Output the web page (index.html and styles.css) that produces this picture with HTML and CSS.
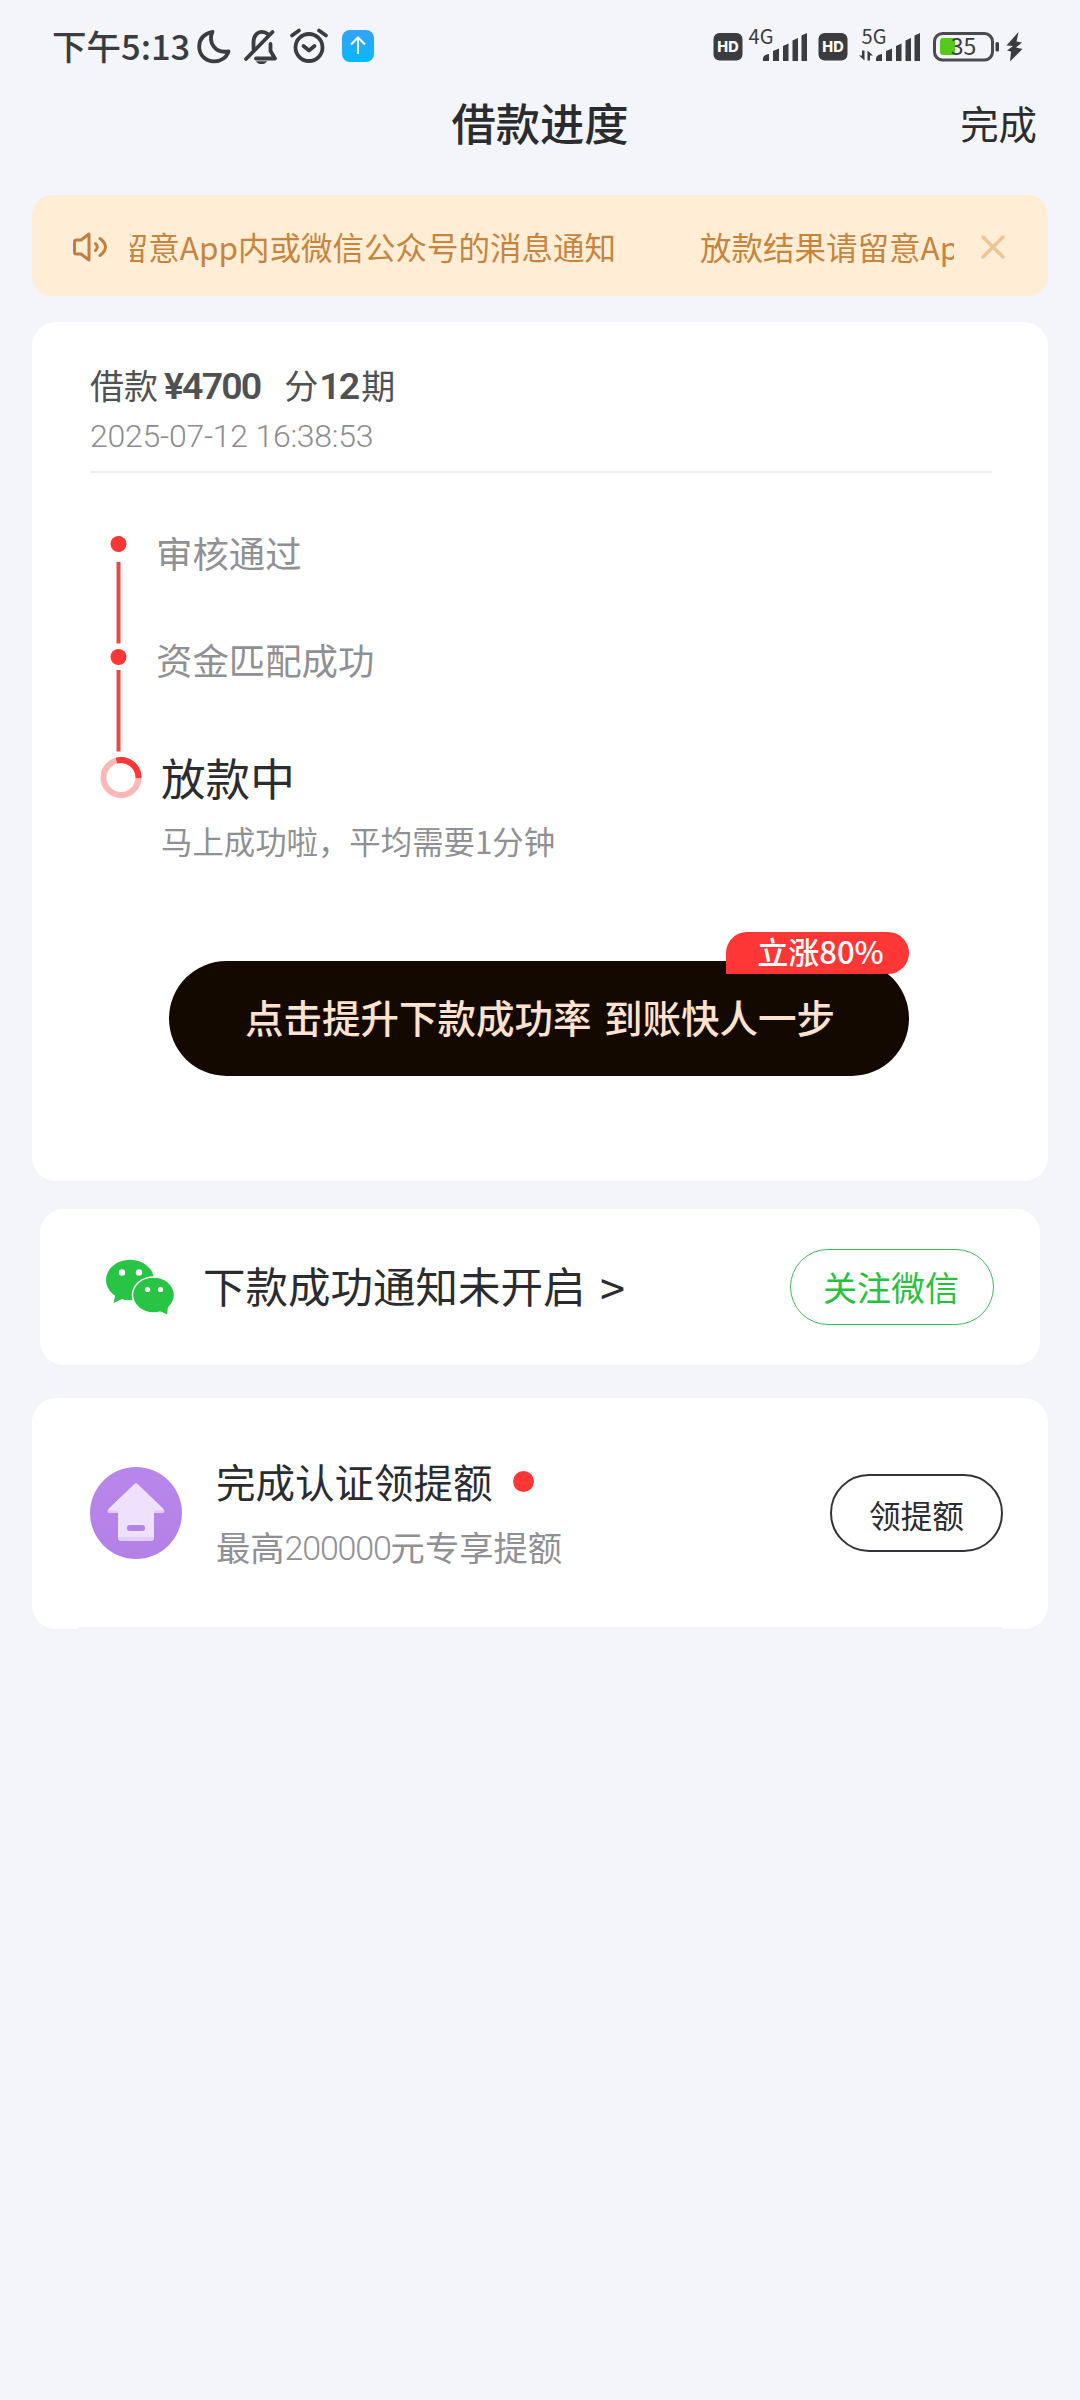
FILE: index.html
```html
<!DOCTYPE html>
<html lang="zh-CN">
<head>
<meta charset="utf-8">
<title>借款进度</title>
<link rel="stylesheet" href="styles.css">
</head>
<body>
<header class="status">
  <span class="clock">下午5:13</span>
  <svg class="status-icons" width="182" height="40" viewBox="195 26 182 40">
    <defs><linearGradient id="up" x1="0" y1="0" x2="0" y2="1"><stop offset="0" stop-color="#35a2fb"/><stop offset="1" stop-color="#08b8fb"/></linearGradient></defs>
    <g fill="none" stroke="#3b3c3f" stroke-width="3.800" stroke-linecap="round" stroke-linejoin="round">
      <path d="M212.500 31.800C203 34 199.200 40 199.200 46.500C199.200 55 205.500 61.300 214 61.300C221 61.300 226.500 57.500 228.500 51.300C216 54 207.500 43 212.500 31.800Z"/>
      <path d="M253.500 49V42.500C253.500 36 257 31.800 262 31.800C264.500 31.800 266.500 32.800 268 34.200M246 59L272.500 32M256 58.500H275L270.500 51V44"/>
      <circle cx="309" cy="47.500" r="13.500"/>
      <path d="M303.500 46L309 50.500L314.500 46M292 35.500L299 30.500M319 30.500L326 35.500"/>
    </g>
    <path d="M256 61.200H267C265 65 258 65 256 61.200Z" fill="#3b3c3f"/>
    <rect x="342" y="30" width="32" height="32" rx="8" fill="url(#up)"/>
    <path d="M358 54V38M351 44.500L358 37.500L365 44.500" fill="none" stroke="#fff" stroke-width="2"/>
  </svg>
  <svg class="status-right" width="316" height="40" viewBox="710 26 316 40">
    <g fill="#3b3c3f">
      <rect x="713.500" y="33" width="29" height="27.500" rx="6"/>
      <rect x="818.500" y="33" width="29" height="27.500" rx="6"/>
      <path id="sig" d="M763 61V58Q764 54.500 769 54V61ZM773 61V51L779 48.500V61ZM783 61V46L788.500 43.500V61ZM792.500 61V40.500L798 38V61ZM801.500 61V35.500L807 33V61Z"/>
      <use href="#sig" x="113"/>
      <path d="M864.500 50.500V60.500L859 55.500H862V50.500ZM867.500 60.500V50.500L873 55.500H870V60.500Z"/>
      <rect x="995.500" y="42" width="3.500" height="9.500" rx="1.500"/>
      <path d="M1018.500 32L1006.500 45.500L1013 46L1007 50.500L1011 51.500L1010 61.500L1022.500 49L1016 47.500L1022 42.500L1016.500 41.500Z"/>
    </g>
    <rect x="934.500" y="33.500" width="58" height="26.500" rx="8" fill="none" stroke="#4a4b4e" stroke-width="3"/>
    <path d="M955 38H943Q940 38 940 41V52Q940 55 943 55H955Z" fill="#58c81c"/>
    <g fill="#fff" font-family="Inter" font-size="14.500" font-weight="800" text-anchor="middle"><text x="728" y="52">HD</text><text x="833" y="52">HD</text></g>
    <g fill="#3b3c3f" font-family="Noto Sans CJK SC, sans-serif" text-anchor="middle"><text x="761" y="44" font-size="20">4G</text><text x="874" y="44" font-size="20">5G</text><text x="963.500" y="54.500" font-size="23">35</text></g>
  </svg>
</header>
<nav class="nav"><h1 class="nav-title">借款进度</h1><a class="nav-done">完成</a></nav>
<main class="content">
  <section class="notice">
    <svg class="notice-speaker" width="38" height="32" viewBox="0 0 38 32" fill="none" stroke="#bd7f42" stroke-width="3" stroke-linejoin="round" stroke-linecap="round"><path d="M3.500 11Q3.500 9 5.500 9H10L18 3V29L10 23H5.500Q3.500 23 3.500 21Z"/><path d="M24.500 12.500Q28 16 24.500 19.500M29 7.500Q40 16 29 24.500"/></svg>
    <div class="ticker"><span>放款结果请留意App内或微信公众号的消息通知</span><span>放款结果请留意App内或微信公众号的消息通知</span></div>
    <svg class="notice-close" width="26" height="26" viewBox="0 0 26 26" stroke="#eec598" stroke-width="3.500" stroke-linecap="round"><path d="M3 3L23 23M23 3L3 23"/></svg>
  </section>
  <section class="card progress">
    <p class="loan">借款<b class="amount">¥4700</b><span class="term">分</span><b class="count">12</b>期</p>
    <p class="date">2025-07-12 16:38:53</p>
    <hr class="rule">
    <div class="steps">
      <svg class="rail" width="46" height="264" viewBox="98 534 46 264">
        <g fill="#fe3636"><circle cx="118.500" cy="544" r="8"/><circle cx="118.500" cy="657" r="8"/></g>
        <path d="M118.500 562V643.500M118.500 670V751.500" stroke="#f04545" stroke-width="4"/>
        <g fill="none" stroke-width="6"><circle cx="121" cy="777.500" r="17.500" stroke="#ffb6b6"/><path d="M116.500 760.600A17.500 17.500 0 0 1 138.500 778" stroke="#fe3636"/></g>
      </svg>
      <div class="step-texts"><p class="step">审核通过</p><p class="step">资金匹配成功</p><p class="step-now">放款中</p><p class="step-note">马上成功啦，平均需要1分钟</p></div>
    </div>
    <div class="boost">点击提升下款成功率 到账快人一步<span class="boost-tag">立涨80%</span></div>
  </section>
  <section class="card wechat">
    <svg class="wechat-logo" width="70" height="56" viewBox="105 1258 70 56">
      <g fill="#28c445">
        <ellipse cx="130" cy="1279" rx="24" ry="20.200"/>
        <path d="M115.500 1293L113.500 1302L123 1297.500Z"/>
      </g>
      <ellipse cx="153.500" cy="1294" rx="21.800" ry="18.800" fill="#fff"/>
      <g fill="#28c445">
        <ellipse cx="153.500" cy="1294" rx="20.300" ry="17.300"/>
        <path d="M168 1304L167.200 1313.500L158.500 1309.500Z"/>
      </g>
      <g fill="#fff"><circle cx="122" cy="1271.500" r="3.200"/><circle cx="139" cy="1271.500" r="3.200"/><circle cx="147.500" cy="1288.500" r="2.600"/><circle cx="160.500" cy="1288.500" r="2.600"/></g>
    </svg>
    <span class="wechat-text">下款成功通知未开启 <i class="gt">&gt;</i></span>
    <button class="pill pill-green">关注微信</button>
  </section>
  <section class="card quota">
    <svg class="quota-icon" width="92" height="92" viewBox="0 0 92 92">
      <defs><linearGradient id="pu" x1="0" y1="0" x2="0" y2="1"><stop offset="0" stop-color="#b986eb"/><stop offset="1" stop-color="#b381e6"/></linearGradient></defs>
      <circle cx="46" cy="46" r="46" fill="url(#pu)"/>
      <path d="M43.500 18Q46 15 48.500 18L73.500 42Q76 46 72 46H64V71Q64 74 61 74H31Q28 74 28 71V46H20Q16 46 18.500 42Z" fill="#e3ccf9"/>
      <path d="M43.500 18Q46 15 48.500 18L74 42.500Q72 43.500 70 43.500H64V70H28V43.500H22Q20 43.500 18 42.500Z" fill="#efe0fd"/>
      <rect x="37" y="58" width="18" height="6" rx="2.500" fill="#b583e8"/>
    </svg>
    <div class="quota-text"><p class="quota-title">完成认证领提额<i class="dot"></i></p><p class="quota-sub">最高<span class="din">200000</span>元专享提额</p></div>
    <button class="pill pill-dark">领提额</button>
  </section>
</main>
</body>
</html>
```
FILE: styles.css
```css
* { box-sizing: border-box; }
body { margin: 0; width: 1080px; height: 2400px; overflow: hidden; background: #f4f5fa; color: #2b2c2f; font-family: "Noto Sans CJK SC", sans-serif; }
p, h1 { margin: 0; font-weight: 400; }
p, span, h1, a, button { white-space: nowrap; }
i { font-style: normal; }
.status { display: flex; align-items: flex-start; height: 80px; padding: 26px 54px 0 52px; }
.status svg { overflow: visible; }
.clock { width: 143px; font-size: 34.5px; font-weight: 500; line-height: 38px; color: #3b3c3f; }
.status-right { margin-left: auto; }
.nav { display: grid; grid-template-columns: 1fr auto 1fr; align-items: center; height: 84px; padding: 0 43px; }
.nav-title { grid-column: 2; font-size: 44.3px; font-weight: 500; line-height: 84px; }
.nav-done { justify-self: end; font-size: 38.4px; line-height: 84px; }
.content { padding: 31px 32px 0; }
.notice { display: flex; align-items: center; height: 101px; padding: 0 42px 0 39px; border-radius: 20px; background: #ffeed5; color: #c6853f; }
.notice-speaker { margin-top: 2px; }
.ticker { display: flex; justify-content: flex-end; gap: 84px; width: 824px; margin-left: 21px; overflow: hidden; font-size: 31.5px; line-height: 48px; }
.ticker span:first-child { margin-left: -999px; }
.ticker span:last-child { flex: none; width: 254px; }
.notice-close { margin: 2px 0 0 auto; }
.card { background: #fff; border-radius: 24px; }
.progress { height: 859px; margin-top: 26px; padding: 39px 56px 0 58px; }
.loan { display: flex; height: 50px; font-size: 34px; line-height: 48px; color: #505153; }
.amount, .count { font-family: Roboto, sans-serif; font-size: 37.5px; font-weight: 600; letter-spacing: -1.9px; line-height: 51px; }
.amount { margin-left: 6px; }
.term { margin-left: 24px; }
.count { margin: 0 3px 0 1px; }
.date { font-family: Roboto, sans-serif; font-size: 32px; font-weight: 350; line-height: 40px; letter-spacing: -.25px; margin-top: 5px; color: #8c8c8f; }
.rule { height: 2px; margin: 15px 0 0; border: 0; background: #eeeeef; }
.steps { display: flex; margin-top: 61px; padding-left: 8px; height: 330px; }
.step-texts { margin-left: 12px; }
.step { height: 107px; font-size: 36.4px; line-height: 36px; color: #909094; }
.step-now { margin-left: 5px; font-size: 44.6px; line-height: 60px; margin-top: -1px; }
.step-note { margin-left: 5px; margin-top: 10px; font-size: 31.4px; line-height: 48px; color: #909094; }
.boost { position: relative; width: 740px; height: 115px; margin: 97px 0 0 79px; border-radius: 58px; background: #140900; color: #fde2cf; font-size: 38.500px; font-weight: 500; line-height: 110px; text-align: center; word-spacing: 4px; padding-left: 2px; }
.boost-tag { position: absolute; right: 0; top: -29px; width: 183px; height: 42px; padding-left: 6px; border-radius: 21px 21px 21px 0; background: #fe3636; color: #fff; font-size: 31px; line-height: 38px; }
.wechat { display: flex; align-items: center; height: 156px; margin: 28px 8px 0; padding: 0 46px 0 65px; }
.wechat-text { margin-left: 28px; margin-top: -4px; font-size: 42.500px; line-height: 60px; }
.gt { display: inline-block; margin: 0 0 -3px 5px; font-size: 45px; line-height: 40px; vertical-align: -3px; }
.pill { margin-left: auto; padding: 0; background: none; font-family: inherit; }
.pill-green { width: 204px; height: 76px; border: 1px solid #3cb95a; border-radius: 38px; color: #27c142; font-size: 34px; line-height: 72px; padding-right: 2px; }
.quota { display: flex; align-items: flex-start; height: 231px; margin-top: 33px; padding: 0 45px 0 58px; background: linear-gradient(#f4f4f6, #f4f4f6) 46px 100% / 925px 2px no-repeat #fff; }
.quota-icon { margin-top: 69px; }
.quota-text { margin: 55px 0 0 34px; }
.quota-title { display: flex; align-items: center; font-size: 39.500px; line-height: 56px; }
.dot { width: 21px; height: 21px; margin-left: 20px; border-radius: 50%; background: #fe3636; }
.quota-sub { display: flex; margin-top: 13px; font-size: 34.3px; line-height: 48px; color: #909094; }
.din { font-family: Roboto, sans-serif; font-weight: 350; font-size: 34px; letter-spacing: -1.2px; line-height: 52px; }
.pill-dark { width: 173px; height: 78px; margin-top: 76px; border: 2px solid #333437; border-radius: 39px; color: #2b2c2f; font-size: 31.600px; line-height: 76px; }
```
